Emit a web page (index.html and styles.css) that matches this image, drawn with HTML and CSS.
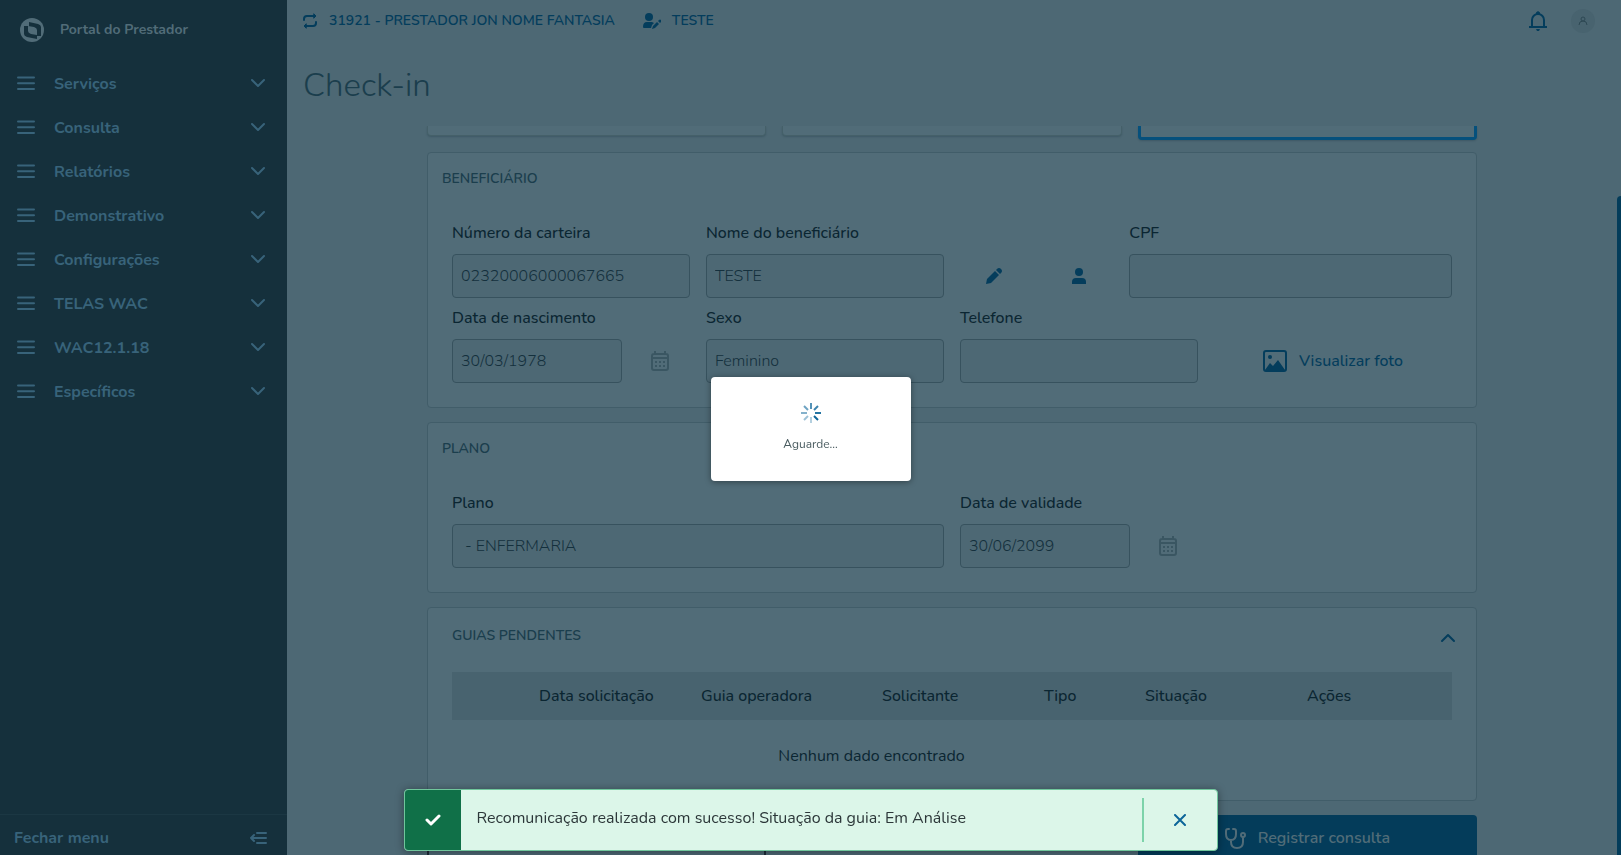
FILE: index.html
```html
<!DOCTYPE html>
<html lang="pt-BR">

<head>
    <meta charset="UTF-8">
    <meta name="viewport" content="width=device-width, initial-scale=1.0">
    <title>Portal do Prestador</title>
    <link rel="stylesheet" href="styles.css">
</head>

<body>
    <!-- Shared icons -->
    <svg class="sprite" aria-hidden="true">
        <symbol id="bars" viewBox="0 0 18 14">
            <path d="M1 1.500h16M1 7.200h16M1 13h16" fill="none" stroke="currentColor" stroke-width="2" stroke-linecap="round" />
        </symbol>
        <symbol id="chevron" viewBox="0 0 16 10">
            <path d="M2 2l6 6 6-6" fill="none" stroke="currentColor" stroke-width="2" stroke-linecap="round" stroke-linejoin="round" />
        </symbol>
        <symbol id="calendar" viewBox="0 0 18 20">
            <path d="M3 3h12a2 2 0 0 1 2 2v12a2 2 0 0 1-2 2H3a2 2 0 0 1-2-2V5a2 2 0 0 1 2-2zM1 7h16M4 0v3M14 0v3" fill="none" stroke="currentColor" stroke-width="2" />
            <path d="M4 10h2v2H4zM8 10h2v2H8zM12 10h2v2h-2zM4 14h2v2H4zM8 14h2v2H8zM12 14h2v2h-2z" fill="currentColor" />
        </symbol>
    </svg>

    <div class="app">
        <aside class="sidebar">
            <div class="brand">
                <svg width="24" height="24" viewBox="0 0 24 24">
                    <circle cx="12" cy="12" r="12" fill="#516c78" />
                    <path d="M9 4l9 2q3 1 3 3v9h-4v3l-10-2q-3-1-3-3V8h5z" fill="#15303c" />
                    <path d="M8 8l6 1q3 1 3 3v5l-6-1q-3-1-3-3z" fill="#516c78" />
                </svg>
                <span>Portal do Prestador</span>
            </div>
            <nav class="menu">
                <button type="button"><svg class="bars"><use href="#bars" /></svg><span>Serviços</span><svg class="chevron"><use href="#chevron" /></svg></button>
                <button type="button"><svg class="bars"><use href="#bars" /></svg><span>Consulta</span><svg class="chevron"><use href="#chevron" /></svg></button>
                <button type="button"><svg class="bars"><use href="#bars" /></svg><span>Relatórios</span><svg class="chevron"><use href="#chevron" /></svg></button>
                <button type="button"><svg class="bars"><use href="#bars" /></svg><span>Demonstrativo</span><svg class="chevron"><use href="#chevron" /></svg></button>
                <button type="button"><svg class="bars"><use href="#bars" /></svg><span>Configurações</span><svg class="chevron"><use href="#chevron" /></svg></button>
                <button type="button"><svg class="bars"><use href="#bars" /></svg><span>TELAS WAC</span><svg class="chevron"><use href="#chevron" /></svg></button>
                <button type="button"><svg class="bars"><use href="#bars" /></svg><span>WAC12.1.18</span><svg class="chevron"><use href="#chevron" /></svg></button>
                <button type="button"><svg class="bars"><use href="#bars" /></svg><span>Específicos</span><svg class="chevron"><use href="#chevron" /></svg></button>
            </nav>
            <button type="button" class="close-menu">
                <span>Fechar menu</span>
                <svg width="18" height="14" viewBox="0 0 18 14" fill="none" stroke="currentColor" stroke-width="2" stroke-linecap="round" stroke-linejoin="round">
                    <path d="M8 2h9M2 7h15M8 12h9M5 4L2 7l3 3" />
                </svg>
            </button>
        </aside>

        <div class="main">
            <header class="topbar">
                <a href="#" class="top-link">
                    <svg width="16" height="16" viewBox="0 0 16 16" fill="none" stroke="currentColor" stroke-width="2" stroke-linecap="round" stroke-linejoin="round">
                        <path d="M2 7V6a3 3 0 0 1 3-3h8M14 9v1a3 3 0 0 1-3 3H3" />
                        <path d="M12 1l2 2-2 2zM4 11l-2 2 2 2z" fill="currentColor" stroke-width="1" />
                    </svg>
                    31921 - PRESTADOR JON NOME FANTASIA
                </a>
                <a href="#" class="top-link">
                    <svg width="18" height="16" viewBox="0 0 18 16" fill="currentColor">
                        <circle cx="6" cy="4" r="4" />
                        <path d="M0 15v-1q0-5 4-5h5l2 1-2 2-1 3H1q-1 0-1-1zM10 13l4-4 2 2-4 4-3 1zM15 8l1-1q1-1 2 0v2l-1 1-2-2z" />
                    </svg>
                    TESTE
                </a>
                <button type="button" class="bell" aria-label="Notificações">
                    <svg width="18" height="20" viewBox="0 0 18 20">
                        <path d="M3 16V9a6 6 0 0 1 12 0v7M0 16h18" fill="none" stroke="currentColor" stroke-width="2" />
                        <path d="M7 3V1.500L9 0l2 1.500V3zM7 18h4l-1 2H8z" fill="currentColor" />
                    </svg>
                </button>
                <span class="avatar">
                    <svg width="10" height="10" viewBox="0 0 10 10" fill="none" stroke="#2d4853">
                        <circle cx="5" cy="3" r="2" />
                        <path d="M1 9q0-4 4-4t4 4" />
                    </svg>
                </span>
            </header>

            <h1>Check-in</h1>

            <main class="scroller">
                <div class="content">
                    <div class="cards">
                        <div class="card"></div>
                        <div class="card"></div>
                        <div class="card active"></div>
                    </div>

                    <section class="panel">
                        <h2>BENEFICIÁRIO</h2>
                        <div class="fields">
                            <div class="field span-3">
                                <label for="carteira">Número da carteira</label>
                                <input type="text" id="carteira" value="02320006000067665" readonly>
                            </div>
                            <div class="field span-3">
                                <label for="nome">Nome do beneficiário</label>
                                <input type="text" id="nome" value="TESTE" readonly>
                            </div>
                            <button type="button" class="icon-btn" aria-label="Editar">
                                <svg width="16" height="16" viewBox="0 0 16 16" fill="currentColor">
                                    <path d="M0 16l1-5 8-8 4 4-8 8zM10 2l1-1q2-2 4 0t0 4l-1 1z" />
                                </svg>
                            </button>
                            <button type="button" class="icon-btn" aria-label="Ver beneficiário">
                                <svg width="14" height="16" viewBox="0 0 14 16" fill="currentColor">
                                    <circle cx="7" cy="4" r="4" />
                                    <path d="M0 16v-2q0-4 4-4h6q4 0 4 4v2z" />
                                </svg>
                            </button>
                            <div class="field span-4">
                                <label for="cpf">CPF</label>
                                <input type="text" id="cpf" readonly>
                            </div>
                            <div class="field span-3">
                                <label for="nascimento">Data de nascimento</label>
                                <div class="date">
                                    <input type="text" id="nascimento" value="30/03/1978" readonly>
                                    <button type="button" aria-label="Abrir calendário"><svg width="18" height="20"><use href="#calendar" /></svg></button>
                                </div>
                            </div>
                            <div class="field span-3">
                                <label for="sexo">Sexo</label>
                                <input type="text" id="sexo" value="Feminino" readonly>
                            </div>
                            <div class="field span-3">
                                <label for="telefone">Telefone</label>
                                <input type="text" id="telefone" readonly>
                            </div>
                            <button type="button" class="photo-btn">
                                <svg width="24" height="22" viewBox="0 0 24 22">
                                    <rect x="1" y="1" width="22" height="20" rx="2" fill="none" stroke="currentColor" stroke-width="2" />
                                    <circle cx="7" cy="7" r="2" fill="currentColor" />
                                    <path d="M2 20l5-7 3 3 5-6 7 10z" fill="currentColor" />
                                </svg>
                                Visualizar foto
                            </button>
                        </div>
                    </section>

                    <section class="panel">
                        <h2>PLANO</h2>
                        <div class="fields">
                            <div class="field span-6">
                                <label for="plano">Plano</label>
                                <input type="text" id="plano" value=" - ENFERMARIA" readonly>
                            </div>
                            <div class="field span-3">
                                <label for="validade">Data de validade</label>
                                <div class="date">
                                    <input type="text" id="validade" value="30/06/2099" readonly>
                                    <button type="button" aria-label="Abrir calendário"><svg width="18" height="20"><use href="#calendar" /></svg></button>
                                </div>
                            </div>
                        </div>
                    </section>

                    <section class="panel guides">
                        <div class="guides-head">
                            <h2>GUIAS PENDENTES</h2>
                            <button type="button" aria-label="Recolher"><svg class="chevron up"><use href="#chevron" /></svg></button>
                        </div>
                        <table>
                            <thead>
                                <tr>
                                    <th class="c-select"></th>
                                    <th class="c-date">Data solicitação</th>
                                    <th class="c-guide">Guia operadora</th>
                                    <th class="c-req">Solicitante</th>
                                    <th class="c-type">Tipo</th>
                                    <th class="c-status">Situação</th>
                                    <th>Ações</th>
                                </tr>
                            </thead>
                            <tbody>
                                <tr>
                                    <td colspan="6">Nenhum dado encontrado</td>
                                    <td></td>
                                </tr>
                            </tbody>
                        </table>
                    </section>

                    <div class="actions">
                        <button type="button" class="outline" aria-label="Voltar"></button>
                        <button type="button" class="primary">
                            <svg width="22" height="22" viewBox="0 0 22 22" fill="none" stroke="currentColor" stroke-width="2" stroke-linecap="round">
                                <path d="M4 2H3Q1 2 1 4v3q0 6 5 6t5-6V4q0-2-2-2H8M6 13v2q0 6 6 6t6-6v-4" />
                                <circle cx="18" cy="8" r="2" />
                            </svg>
                            Registrar consulta
                        </button>
                    </div>
                </div>
                <div class="scroll-thumb"></div>
            </main>
        </div>
    </div>

    <div class="loading" role="status">
        <svg width="20" height="20" viewBox="0 0 20 20" stroke="#0c6599" stroke-width="2">
            <path d="M10 0v6" opacity=".7" />
            <path d="M17 3l-4 4" opacity=".8" />
            <path d="M20 10h-6" opacity=".9" />
            <path d="M17 17l-4-4" />
            <path d="M10 20v-6" opacity=".3" />
            <path d="M3 17l4-4" opacity=".4" />
            <path d="M0 10h6" opacity=".5" />
            <path d="M3 3l4 4" opacity=".6" />
        </svg>
        <span>Aguarde...</span>
    </div>

    <div class="toast" role="alert">
        <div class="toast-icon">
            <svg width="16" height="12" viewBox="0 0 16 12" fill="none" stroke="#fff" stroke-width="3" stroke-linecap="round" stroke-linejoin="round">
                <path d="M2 6l4 4 8-8" />
            </svg>
        </div>
        <p>Recomunicação realizada com sucesso! Situação da guia: Em Análise</p>
        <button type="button" aria-label="Fechar">
            <svg width="12" height="12" viewBox="0 0 12 12" fill="none" stroke="currentColor" stroke-width="2" stroke-linecap="round">
                <path d="M1 1l10 10M11 1L1 11" />
            </svg>
        </button>
    </div>
</body>

</html>
```
FILE: styles.css
```css
* {
    box-sizing: border-box;
}

body {
    margin: 0;
    font-family: Nunito, Lato, sans-serif;
    font-size: 16px;
    line-height: 24px;
    background-color: #4d6874;
    color: #0b2632;
}

button {
    display: flex;
    align-items: center;
    padding: 0;
    border: none;
    background: none;
    font: inherit;
    color: #043d5c;
    cursor: pointer;
}

h1,
h2,
p {
    margin: 0;
}

.sprite {
    display: none;
}

.app {
    display: flex;
    height: 100vh;
    overflow: hidden;
}

/* Sidebar */
.sidebar {
    display: flex;
    flex-direction: column;
    flex: 0 0 287px;
    background-color: #15303c;
    color: #38637a;
}

.brand {
    display: flex;
    align-items: center;
    gap: 16px;
    height: 60px;
    padding-left: 20px;
    font-size: 14px;
    font-weight: 700;
    color: #516c78;
}

.menu {
    flex: 1;
    padding-top: 1px;
}

.menu button {
    width: 100%;
    height: 44px;
    padding: 0 21px 0 17px;
    font-weight: 700;
    color: #38637a;
}

.menu span {
    flex: 1;
    padding: 2px 0 0 19px;
    text-align: left;
}

.bars {
    width: 18px;
    height: 14px;
}

.chevron {
    width: 16px;
    height: 10px;
}

.up {
    transform: rotate(180deg);
}

.close-menu {
    justify-content: space-between;
    height: 41px;
    padding: 6px 20px 0 14px;
    border-top: 1px solid #1b3743;
    font-weight: 700;
    color: #38637a;
}

/* Main area */
.main {
    display: flex;
    flex: 1;
    flex-direction: column;
    min-width: 0;
}

.topbar {
    display: flex;
    align-items: center;
    height: 42px;
    padding: 0 26px 0 15px;
}

.top-link {
    display: flex;
    align-items: center;
    gap: 11px;
    margin-right: 28px;
    font-size: 14px;
    font-weight: 600;
    color: #043d5c;
    text-decoration: none;
}

.bell {
    margin-left: auto;
}

.avatar {
    display: flex;
    align-items: center;
    justify-content: center;
    width: 24px;
    height: 24px;
    margin-left: 24px;
    border-radius: 50%;
    background-color: #48636f;
}

h1 {
    height: 84px;
    padding: 20px 16px;
    font-size: 33px;
    font-weight: 300;
    line-height: 48px;
    color: #1b3e4d;
}

.scroller {
    position: relative;
    flex: 1;
    min-height: 0;
    padding-right: 4px;
    overflow: hidden;
}

.scroll-thumb {
    position: absolute;
    top: 70px;
    right: 0;
    bottom: 0;
    width: 4px;
    border-radius: 4px 0 0 0;
    background-color: #033c5a;
}

.content {
    display: flex;
    flex-direction: column;
    gap: 14px;
    max-width: 1050px;
    margin: 0 auto;
}

.cards,
.actions {
    display: grid;
    grid-template-columns: repeat(3, 1fr);
    gap: 16px;
}

/* only the lower edge of the cards is left in view */
.cards {
    align-items: start;
    height: 12px;
}

.card {
    height: 10px;
    border: 1px solid #456069;
    border-top: none;
    border-radius: 0 0 4px 4px;
    background-color: #516c78;
    box-shadow: 0 1px 2px rgba(0, 30, 45, 0.2);
}

.card.active {
    height: 14px;
    border: 3px solid #05507c;
    border-top: none;
}

.panel {
    padding: 14px 24px 24px;
    border: 1px solid #415d69;
    border-radius: 4px;
    background-color: #516c78;
}

h2 {
    font-size: 14px;
    font-weight: 600;
    color: #1b3e4d;
}

.panel > h2 {
    margin: 0 0 30px -10px;
}

.fields {
    display: grid;
    grid-template-columns: repeat(12, 1fr);
    gap: 8px 16px;
    align-items: end;
}

.field {
    display: flex;
    flex-direction: column;
    gap: 9px;
}

.span-3 {
    grid-column: span 3;
}

.span-4 {
    grid-column: span 4;
}

.span-6 {
    grid-column: span 6;
}

label {
    font-weight: 500;
}

input {
    width: 100%;
    height: 44px;
    padding: 0 8px;
    border: 1px solid #37525e;
    border-radius: 4px;
    background-color: #4d6874;
    font: inherit;
    font-weight: 300;
    color: #14303d;
}

.date {
    display: flex;
}

.date input {
    flex: 1;
    min-width: 0;
}

.date button {
    justify-content: center;
    width: 68px;
    padding-left: 8px;
    color: #3a5662;
}

.icon-btn,
.photo-btn {
    justify-content: center;
    height: 44px;
}

.photo-btn {
    grid-column: span 3;
    gap: 12px;
    font-weight: 500;
}

.guides {
    padding: 16px 24px 9px;
}

.guides-head {
    display: flex;
    align-items: center;
    justify-content: space-between;
    height: 24px;
    margin-bottom: 24px;
}

.guides-head button {
    margin-right: -4px;
    padding-top: 4px;
}

table {
    width: 100%;
    border-collapse: collapse;
    table-layout: fixed;
}

th {
    height: 48px;
    padding: 0;
    background-color: #48636f;
    font-weight: 500;
    text-align: left;
    white-space: nowrap;
}

td {
    height: 71px;
    padding: 0 16px 0 0;
    text-align: center;
}

.c-select {
    width: 87px;
}

.c-date,
.c-req,
.c-status {
    width: 162px;
}

.c-guide {
    width: 181px;
}

.c-type {
    width: 101px;
}

.actions button {
    justify-content: center;
    gap: 11px;
    height: 46px;
    border-radius: 4px;
    font-weight: 600;
}

.actions .outline {
    border: 2px solid #1d2b38;
}

.actions .primary {
    grid-column: 3;
    background-color: #043c5a;
    color: #516c78;
}

/* Loading box */
.loading {
    position: fixed;
    top: calc(50% + 1px);
    left: 50%;
    display: flex;
    flex-direction: column;
    align-items: center;
    gap: 9px;
    width: 200px;
    height: 104px;
    padding-top: 26px;
    border-radius: 4px;
    background-color: #fff;
    box-shadow: 0 1px 6px rgba(0, 0, 0, 0.4);
    font-size: 12px;
    color: #4a5c60;
    transform: translate(-50%, -50%);
}

/* Success message */
.toast {
    position: fixed;
    bottom: 4px;
    left: 50%;
    display: flex;
    align-items: center;
    width: 814px;
    max-width: 100%;
    height: 62px;
    border: 1px solid #70c69c;
    border-radius: 4px;
    background-color: #dcf6e9;
    box-shadow: 0 1px 8px rgba(0, 0, 0, 0.4);
    color: #2c3739;
    overflow: hidden;
    transform: translateX(-50%);
}

.toast-icon {
    display: flex;
    align-items: center;
    justify-content: center;
    align-self: stretch;
    width: 56px;
    background-color: #107048;
}

.toast p {
    flex: 1;
    padding: 0 16px 4px;
}

.toast button {
    justify-content: center;
    width: 75px;
    height: 44px;
    border-left: 2px solid #7dd3aa;
    color: #0c6599;
}
```
